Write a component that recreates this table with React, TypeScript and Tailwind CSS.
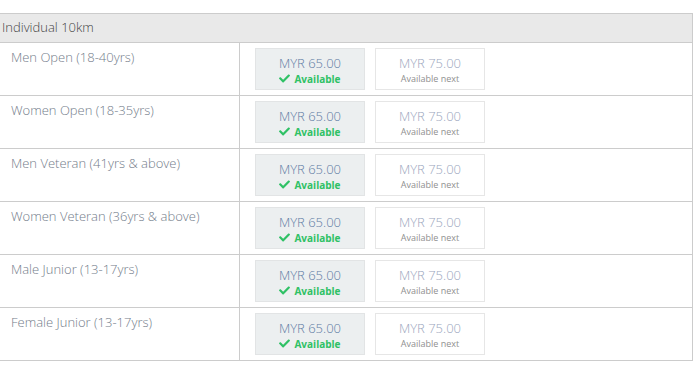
import React from "react";

const categories = [
  "Men Open (18-40yrs)",
  "Women Open (18-35yrs)",
  "Men Veteran (41yrs & above)",
  "Women Veteran (36yrs & above)",
  "Male Junior (13-17yrs)",
  "Female Junior (13-17yrs)",
];

const CheckIcon = () => (
  <svg viewBox="0 0 512 512" className="w-[11px] h-[11px] fill-current">
    <path d="M173.898 439.404l-166.4-166.4c-9.997-9.997-9.997-26.206 0-36.204l36.203-36.204c9.997-9.998 26.207-9.998 36.204 0L192 312.69 432.095 72.596c9.997-9.997 26.207-9.997 36.204 0l36.203 36.204c9.997 9.997 9.997 26.206 0 36.204l-294.4 294.401c-9.998 9.997-26.207 9.997-36.204-.001z" />
  </svg>
);

const App = () => {
  return (
    <div
      className="w-[696px] h-[368px] bg-white pt-[13px] overflow-hidden"
      style={{ fontFamily: '"Open Sans", sans-serif' }}
    >
      <div className="ml-[-1px] w-[694px] border border-[#cccccc]">
        {/* Header */}
        <div className="h-[29px] bg-[#e9e9e9] border-b border-[#cccccc] flex items-center pl-[2px] text-[13px] font-light text-[#444444]">
          Individual 10km
        </div>

        {/* Rows */}
        {categories.map((name, i) => (
          <div
            key={name}
            className={`flex ${i < categories.length - 1 ? "border-b border-[#cccccc]" : ""}`}
          >
            <div className="w-[240px] shrink-0 border-r border-[#cccccc] pl-[11px] pt-[5px] text-[13px] font-light leading-[18px] text-[#737c8a]">
              {name}
            </div>
            <div className="flex gap-[10px] py-[5px] pl-[15px]">
              <div className="w-[110px] h-[42px] pt-[2px] bg-[#eceff0] border border-[#e2e4e5] flex flex-col items-center justify-center">
                <div className="text-[13px] font-light leading-[17px] text-[#5d7ba3]">MYR 65.00</div>
                <div className="flex items-center gap-[4px] text-[10px] leading-[14px] font-bold text-[#2fc165]">
                  <CheckIcon />
                  <span>Available</span>
                </div>
              </div>
              <div className="w-[110px] h-[42px] pt-[2px] bg-white border border-[#e6e6e6] flex flex-col items-center justify-center">
                <div className="text-[13px] font-light leading-[17px] text-[#9aa6bd]">MYR 75.00</div>
                <div className="text-[9px] leading-[14px] text-[#8f8f8f]">Available next</div>
              </div>
            </div>
          </div>
        ))}
      </div>
    </div>
  );
};

export default App;
